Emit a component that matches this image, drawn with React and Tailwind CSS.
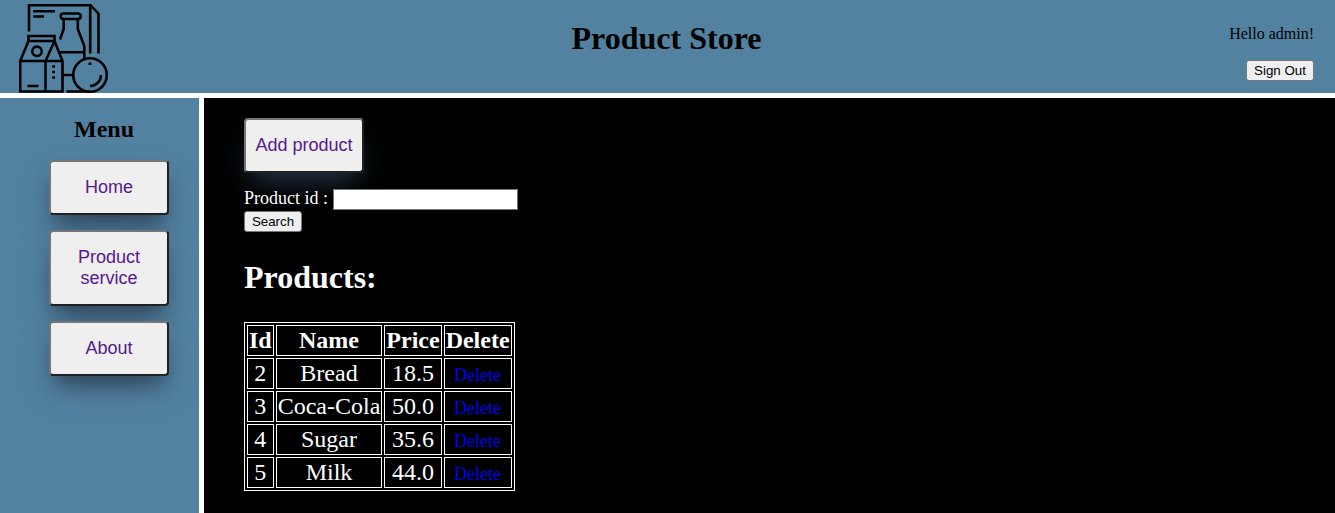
const products = [
  { id: 2, name: "Bread", price: "18.5" },
  { id: 3, name: "Coca-Cola", price: "50.0" },
  { id: 4, name: "Sugar", price: "35.6" },
  { id: 5, name: "Milk", price: "44.0" },
];

const bigButton =
  "box-border flex items-center justify-center rounded-[4px] border-2 border-t-[#767676] border-l-[#767676] border-r-[#212121] border-b-[#212121] bg-[#efefef] text-center font-['Liberation_Sans',sans-serif] text-[18px] leading-[21px] text-[#551a8b] shadow-[0_16px_32px_-6px_rgba(44,62,80,0.55),0_12px_20px_-8px_rgba(34,50,72,0.75)]";

const smallButton =
  "box-border flex h-[21px] items-center justify-center rounded-[3px] border border-[#767676] bg-[#efefef] font-['Liberation_Sans',sans-serif] text-[13.333px] leading-[15px] text-black";

function Logo() {
  return (
    <svg className="mt-[3px] ml-[19px] h-[90px] w-[90px] shrink-0" viewBox="19 3 90 90" fill="none" stroke="#000" strokeWidth="2.6">
      <path d="M29 31.500V5.200H90.500L98.500 13.700V53.500M90.200 5.200V53.500M33.200 11.200H55M33.200 16.500H44" />
      <rect x="60.700" y="13.500" width="20" height="5.500" rx="2.750" />
      <path d="M63.700 19V29L60 39.500M77.800 19V29L84.300 46V58M59 52.300H84M63 75H73" />
      <path d="M28.500 41V36H54.500V41ZM28.500 41L20.200 61V91.500H62.500V61L54.500 41L45.500 61V91.500M20.200 61H62.500" />
      <circle cx="37" cy="51.300" r="4.700" />
      <path d="M27.500 86H38.500M52.200 66.500H55M52.200 72H55M52.200 77.500H55M88.500 63.700H91.500" />
      <circle cx="90" cy="75" r="16.800" />
      <path d="M66.500 91.500H90M101 75A11 11 0 0 1 90 86" />
    </svg>
  );
}

export default function App() {
  return (
    <div className="flex h-[513px] w-full flex-col bg-white font-['Liberation_Serif',serif] text-black">
      <header className="grid h-[93px] shrink-0 grid-cols-[200px_1fr_200px] bg-[#5382a1]">
        <Logo />
        <h1 className="mt-[20px] pr-[2px] text-center text-[32px] leading-[37px] font-bold">Product Store</h1>
        <div className="flex flex-col items-end pt-[25px] pr-[21px]">
          <span className="text-[16px] leading-[18px]">Hello admin!</span>
          <button className={`${smallButton} mt-[17px] w-[68px]`}>Sign Out</button>
        </div>
      </header>
      <div className="mt-[5px] flex min-h-0 flex-1 gap-[5px]">
        <nav className="flex w-[199px] shrink-0 flex-col bg-[#5382a1] pt-[18px] pl-[49px]">
          <h2 className="w-[110px] text-center text-[24px] leading-[27px] font-bold">Menu</h2>
          <div className="mt-[17px] flex w-[120px] flex-col gap-[15px]">
            <button className={`${bigButton} h-[55px]`}>Home</button>
            <button className={`${bigButton} h-[76px] px-[20px]`}>Product service</button>
            <button className={`${bigButton} h-[55px]`}>About</button>
          </div>
        </nav>
        <main className="flex-1 bg-black pt-[20px] pl-[40px] text-white">
          <button className={`${bigButton} h-[55px] w-[120px]`}>Add product</button>
          <div className="mt-[16px] flex h-[21px] items-start text-[18px]">
            <label htmlFor="product-id" className="w-[89px] leading-[19px] whitespace-nowrap">Product id :</label>
            <input id="product-id" className="h-[21px] w-[185px] border border-[#767676] bg-white text-black" />
          </div>
          <button className={`${smallButton} mt-[1px] w-[58px]`}>Search</button>
          <h1 className="mt-[27px] text-[32px] leading-[37px] font-bold">Products:</h1>
          <table className="mt-[26px] border-separate border-spacing-[2px] border border-white text-center text-[24px] leading-[27px]">
            <thead>
              <tr>
                <th className="border border-white p-px">Id</th>
                <th className="border border-white p-px">Name</th>
                <th className="border border-white p-px">Price</th>
                <th className="border border-white p-px">Delete</th>
              </tr>
            </thead>
            <tbody>
              {products.map((product) => (
                <tr key={product.id}>
                  <td className="border border-white p-px">{product.id}</td>
                  <td className="border border-white p-px">{product.name}</td>
                  <td className="border border-white p-px">{product.price}</td>
                  <td className="border border-white p-px">
                    <a href="#" className="text-[18px] leading-[18px] text-[#0000ee]">Delete</a>
                  </td>
                </tr>
              ))}
            </tbody>
          </table>
        </main>
      </div>
    </div>
  );
}
